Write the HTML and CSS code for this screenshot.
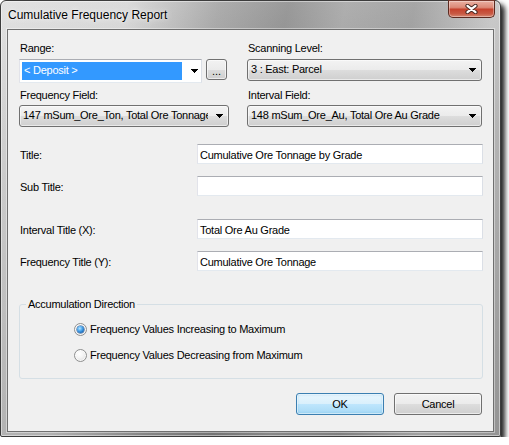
FILE: index.html
```html
<!DOCTYPE html>
<html>
<head>
<meta charset="utf-8">
<link rel="stylesheet" href="styles.css">
</head>
<body>
<div class="window">
  <div class="titlebar">
    <span class="title">Cumulative Frequency Report</span>
    <div class="close">
      <svg width="13" height="10" viewBox="0 0 13 10"><path d="M2.5 1.8 L10.5 8.2 M10.5 1.8 L2.5 8.2" stroke="#4a2a24" stroke-width="4.2" stroke-linecap="round" fill="none"/><path d="M2.5 1.8 L10.5 8.2 M10.5 1.8 L2.5 8.2" stroke="#ffffff" stroke-width="2.2" stroke-linecap="round" fill="none"/></svg>
    </div>
  </div>
  <div class="client">
    <div class="top-grid">
      <div class="lbl">Range:</div>
      <div class="lbl">Scanning Level:</div>
      <div class="range-row">
        <div class="edit-combo">
          <span class="sel">&lt; Deposit &gt;</span>
          <svg class="arrow" width="7" height="4" viewBox="0 0 7 4"><path d="M0 0H7V1H6V2H5V3H4V4H3V3H2V2H1V1H0Z"/></svg>
        </div>
        <div class="btn small">...</div>
      </div>
      <div class="combo">
        <span class="val">3 : East: Parcel</span>
        <svg class="arrow" width="7" height="4" viewBox="0 0 7 4"><path d="M0 0H7V1H6V2H5V3H4V4H3V3H2V2H1V1H0Z"/></svg>
      </div>
      <div class="lbl">Frequency Field:</div>
      <div class="lbl">Interval Field:</div>
      <div class="combo">
        <span class="val">147 mSum_Ore_Ton, Total Ore Tonnage</span>
        <svg class="arrow" width="7" height="4" viewBox="0 0 7 4"><path d="M0 0H7V1H6V2H5V3H4V4H3V3H2V2H1V1H0Z"/></svg>
      </div>
      <div class="combo">
        <span class="val">148 mSum_Ore_Au, Total Ore Au Grade</span>
        <svg class="arrow" width="7" height="4" viewBox="0 0 7 4"><path d="M0 0H7V1H6V2H5V3H4V4H3V3H2V2H1V1H0Z"/></svg>
      </div>
    </div>

    <div class="fields">
      <div class="field-row"><span class="lbl">Title:</span><div class="input">Cumulative Ore Tonnage by Grade</div></div>
      <div class="field-row"><span class="lbl">Sub Title:</span><div class="input"></div></div>
      <div class="field-row spaced"><span class="lbl">Interval Title (X):</span><div class="input">Total Ore Au Grade</div></div>
      <div class="field-row"><span class="lbl">Frequency Title (Y):</span><div class="input">Cumulative Ore Tonnage</div></div>
    </div>

    <fieldset class="group">
      <legend>Accumulation Direction</legend>
      <div class="radio-row"><span class="radio checked"></span><span>Frequency Values Increasing to Maximum</span></div>
      <div class="radio-row"><span class="radio"></span><span>Frequency Values Decreasing from Maximum</span></div>
    </fieldset>

    <div class="buttons">
      <div class="btn default">OK</div>
      <div class="btn">Cancel</div>
    </div>
  </div>
</div>
</body>
</html>
```

FILE: styles.css
```css
* { box-sizing: border-box; }
html, body { margin: 0; background: #ffffff; }
body {
  font-family: "Liberation Sans", Arial, sans-serif;
  font-size: 11px;
  line-height: 13px;
  color: #000;
  letter-spacing: -0.25px;
}

.window {
  width: 501px;
  height: 437px;
  border: 1px solid #3c3c3c;
  border-radius: 6px 6px 2px 2px;
  padding: 0 6px 4px 6px;
  display: flex;
  flex-direction: column;
  background:
    linear-gradient(to bottom, rgba(255,255,255,0.12) 0%, rgba(0,0,0,0.06) 30%, rgba(0,0,0,0.18) 100%),
    linear-gradient(100deg, #dedede 0%, #d6d6d6 22%, #a2a2a2 38%, #8c8c8c 50%, #a4a4a4 60%, #9a9a9a 72%, #c4c4c4 86%, #b4b4b4 100%);
  box-shadow: inset 0 0 0 1px rgba(255,255,255,0.45), 4px 4px 5px rgba(0,0,0,0.85);
}

.titlebar {
  height: 28px;
  margin: 0 -6px;
  padding: 7px 5px 0 7px;
  display: flex;
  justify-content: space-between;
  align-items: flex-start;
}
.title {
  font-size: 12px;
  line-height: 14px;
  letter-spacing: 0;
  text-shadow: 0 0 6px rgba(255,255,255,0.9), 0 0 2px rgba(255,255,255,0.8);
}
.close {
  width: 47px;
  height: 18px;
  margin-top: -8px;
  border: 1px solid #5c2a20;
  border-top-color: #7a3a2e;
  border-radius: 0 0 5px 5px;
  background: linear-gradient(to bottom, #eab0a2 0%, #dc8a78 40%, #c6432e 52%, #c85a44 80%, #d78a74 100%);
  box-shadow: inset 0 0 0 1px rgba(255,255,255,0.35);
  display: flex;
  align-items: center;
  justify-content: center;
  padding-right: 1px;
}

.client {
  flex: 1;
  background: #f0f0f0;
  border: 1px solid #6f6f6f;
  box-shadow: 0 0 0 1px rgba(255,255,255,0.4);
  padding: 12px 10px 0 11px;
  display: flex;
  flex-direction: column;
}

.top-grid {
  display: grid;
  grid-template-columns: 210px 235px;
  column-gap: 18px;
  grid-template-rows: 17px 30px 16px 22px;
  align-items: start;
}
.lbl { padding-left: 1px; white-space: nowrap; }

.range-row { display: flex; gap: 4px; align-items: flex-start; }
.edit-combo {
  width: 183px;
  height: 24px;
  border: 1px solid;
  border-color: #abadb3 #dbdfe6 #e3e9ef #e2e3ea;
  background: #fff;
  padding: 2px;
  display: flex;
  align-items: flex-start;
}
.sel {
  width: 160px;
  height: 18px;
  background: #3399ff;
  color: #fff;
  padding: 2px 0 0 2px;
}
.edit-combo .arrow { margin: 7px 0 0 9px; }

.combo {
  height: 22px;
  border: 1px solid #707070;
  border-radius: 3px;
  background: linear-gradient(to bottom, #f3f3f3 0%, #ebebeb 50%, #dddddd 51%, #cfcfcf 100%);
  box-shadow: inset 0 0 0 1px rgba(255,255,255,0.55);
  padding: 3px 0 0 3px;
  display: flex;
  align-items: flex-start;
}
.combo .val {
  flex: 1;
  overflow: hidden;
  white-space: nowrap;
  margin-right: 8px;
}
.combo .arrow { flex: none; margin: 5px 5px 0 0; }

.btn {
  height: 22px;
  border: 1px solid #707070;
  border-radius: 3px;
  background: linear-gradient(to bottom, #f2f2f2 0%, #ebebeb 50%, #dddddd 51%, #cfcfcf 100%);
  box-shadow: inset 0 0 0 1px rgba(255,255,255,0.6);
  text-align: center;
  padding-top: 4px;
  width: 88px;
}
.btn.small {
  width: 21px;
  height: 21px;
  padding-top: 5px;
  letter-spacing: 0;
}
.btn.default {
  border-color: #3c7fb1;
  background: linear-gradient(to bottom, #eaf6fd 0%, #d9f0fc 50%, #bee6fd 51%, #a7d9f5 100%);
  box-shadow: inset 0 0 0 1px rgba(255,255,255,0.55), inset 0 0 3px rgba(72,168,224,0.6);
}

.fields {
  margin-top: 17px;
  display: flex;
  flex-direction: column;
  gap: 12px;
}
.field-row { display: flex; height: 20px; }
.field-row.spaced { margin-top: 11px; }
.field-row .lbl { width: 178px; padding-top: 5px; }
.input {
  flex: 1;
  height: 20px;
  border: 1px solid;
  border-color: #abadb3 #dbdfe6 #e3e9ef #e2e3ea;
  background: #fff;
  padding: 4px 0 0 2px;
  white-space: nowrap;
}

.group {
  margin: 27px 0 0 0;
  min-inline-size: 0;
  border: 1px solid #d5dfe5;
  border-radius: 3px;
  padding: 12px 0 16px 6px;
}
.group legend {
  padding: 0 2px;
  line-height: 13px;
}
.radio-row {
  display: flex;
  align-items: flex-start;
  gap: 3px;
  height: 13px;
  margin-left: 48px;
}
.radio-row + .radio-row { margin-top: 13px; }
.radio {
  width: 13px;
  height: 13px;
  border-radius: 50%;
  border: 1px solid #8e8f8f;
  background: radial-gradient(circle at 40% 35%, #ffffff 0%, #f4f4f4 40%, #d6d6d6 100%);
  box-shadow: inset 0 0 0 1px rgba(255,255,255,0.7);
  display: flex;
  align-items: center;
  justify-content: center;
}
.radio.checked::after {
  content: "";
  width: 7px;
  height: 7px;
  border-radius: 50%;
  background: radial-gradient(circle at 40% 35%, #bde6ff 0%, #55aef0 35%, #1c6fc0 70%, #174a86 100%);
  box-shadow: 0 0 0 0.5px #1d4f8a;
}

.buttons {
  display: flex;
  justify-content: flex-end;
  gap: 10px;
  margin-top: 14px;
  padding-right: 1px;
}
```
